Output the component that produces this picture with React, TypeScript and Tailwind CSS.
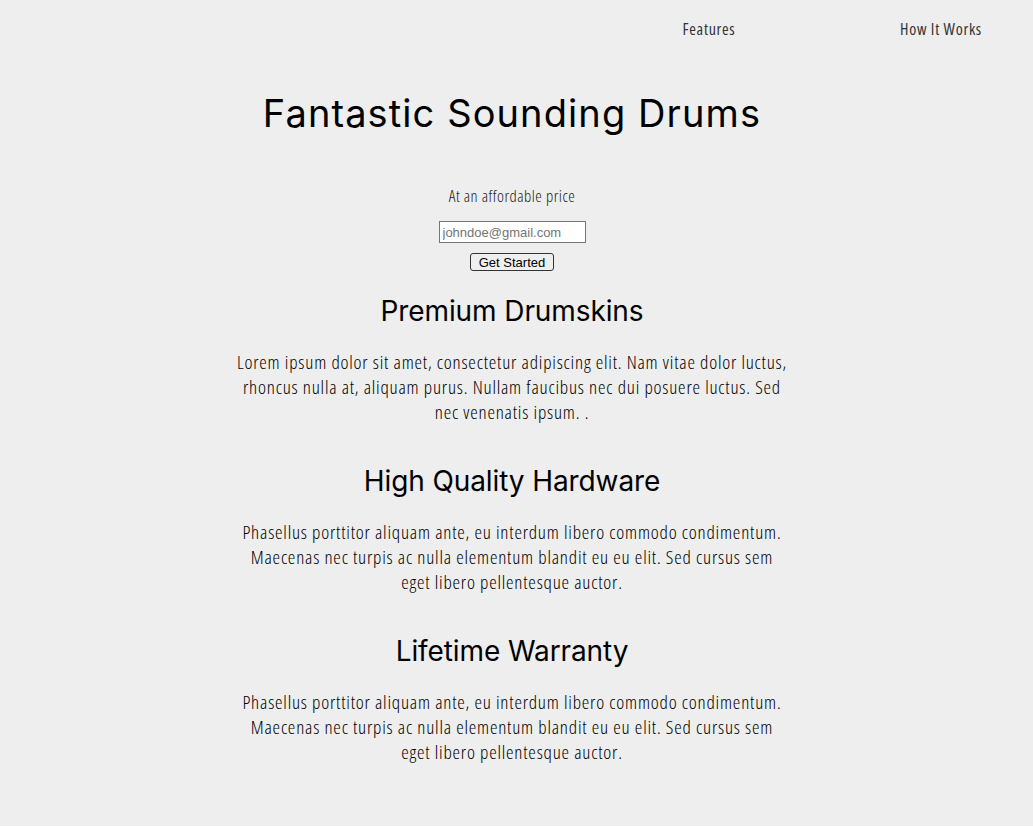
import React from "react";

const sections = [
  {
    title: "Premium Drumskins",
    lines: [
      "Lorem ipsum dolor sit amet, consectetur adipiscing elit. Nam vitae dolor luctus,",
      "rhoncus nulla at, aliquam purus. Nullam faucibus nec dui posuere luctus. Sed",
      "nec venenatis ipsum. .",
    ],
  },
  {
    title: "High Quality Hardware",
    lines: [
      "Phasellus porttitor aliquam ante, eu interdum libero commodo condimentum.",
      "Maecenas nec turpis ac nulla elementum blandit eu eu elit. Sed cursus sem",
      "eget libero pellentesque auctor.",
    ],
  },
  {
    title: "Lifetime Warranty",
    lines: [
      "Phasellus porttitor aliquam ante, eu interdum libero commodo condimentum.",
      "Maecenas nec turpis ac nulla elementum blandit eu eu elit. Sed cursus sem",
      "eget libero pellentesque auctor.",
    ],
  },
];

export default function App() {
  return (
    <div className="min-h-[826px] bg-[#eeeeee] text-[#111] font-['Open_Sans',sans-serif] font-light font-stretch-[85%]">
      <nav className="flex justify-end items-center h-[58px] pr-[42px] text-[16px] tracking-[0.7px] text-[#333] font-normal">
        <a className="w-[100px] text-center">Features</a>
        <a className="ml-[132px] w-[100px] text-center">How It Works</a>
      </nav>
      <main className="w-[1024px] flex flex-col items-center">
        <h1 className="mt-[32px] text-[38px] leading-[46px] tracking-[1.1px] text-black font-normal font-stretch-normal font-['Inter',sans-serif]">
          Fantastic Sounding Drums
        </h1>
        <p className="mt-[48px] text-[16.5px] leading-[24px] tracking-[0.5px] text-[#1a1a1a]">At an affordable price</p>
        <input
          className="mt-[13px] w-[147px] h-[22px] border border-[#767676] bg-white px-[3px] text-[13px] font-normal font-stretch-normal font-['Liberation_Sans',sans-serif] placeholder:text-[#757575] outline-none"
          placeholder="johndoe@gmail.com"
        />
        <button className="mt-[10px] h-[18px] px-[8px] border border-[#333] rounded-[3px] bg-[#efefef] text-[13px] leading-[15px] text-black font-normal font-stretch-normal font-['Liberation_Sans',sans-serif]">
          Get Started
        </button>
        <div className="mt-[23px] flex flex-col items-center gap-[39px]">
          {sections.map((s) => (
            <section key={s.title} className="flex flex-col items-center">
              <h2 className="text-[28px] leading-[34px] tracking-[-0.1px] text-black font-normal font-stretch-normal font-['Inter',sans-serif]">
                {s.title}
              </h2>
              <p className="mt-[22px] w-[600px] text-[19px] leading-[25px] tracking-[0.8px] text-center text-black">
                {s.lines.map((l, i) => (
                  <React.Fragment key={i}>
                    {l}
                    {i < s.lines.length - 1 && <br />}
                  </React.Fragment>
                ))}
              </p>
            </section>
          ))}
        </div>
      </main>
    </div>
  );
}
